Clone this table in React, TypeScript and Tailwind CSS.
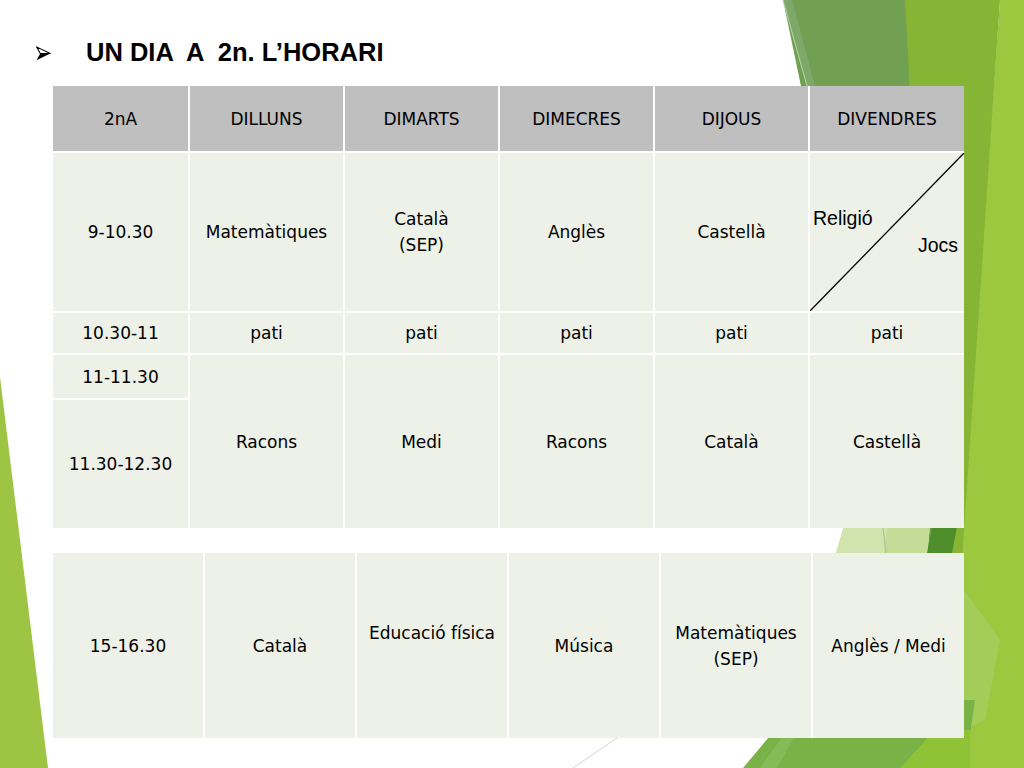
import type { ReactNode } from 'react'

// ---------------------------------------------------------------------------
// Slide: UN DIA A 2n. L'HORARI
// ---------------------------------------------------------------------------

const days = ['DILLUNS', 'DIMARTS', 'DIMECRES', 'DIJOUS', 'DIVENDRES']
const morning = ['Racons', 'Medi', 'Racons', 'Català', 'Castellà']

function Cell({
  children,
  head = false,
  className = '',
}: {
  children?: ReactNode
  head?: boolean
  className?: string
}) {
  return (
    <div
      className={`flex items-center justify-center text-center leading-[26px] ${
        head ? 'bg-[#bfbfbf]' : 'bg-[#edf1e7]'
      } ${className}`}
    >
      {children}
    </div>
  )
}

function Background() {
  return (
    <svg className="absolute inset-0" width="1024" height="768" viewBox="0 0 1024 768">
      <polygon points="0,377 48,768 0,768" fill="#9dc543" />
      <polygon points="1000,0 1024,0 1024,768 880,768 960,560" fill="#9cc840" />
      <polygon points="903,0 1000,0 962,560 935,560" fill="#86b536" />
      <polygon points="783,0 905,0 935,560 900,560" fill="#71a052" />
      <polygon points="783,0 792,0 815,86 807,86" fill="#7ea86a" />
      <polygon points="860,470 935,470 925,580 828,580" fill="#d1e4ad" />
      <polygon points="895,470 935,470 925,580 880,580" fill="#c4dc98" />
      <polygon points="937,500 962,500 947,580 922,580" fill="#4e8e2a" />
      <polygon points="964,590 1000,640 985,720 964,730" fill="#a4cc58" />
      <polygon points="743,768 800,700 975,700 965,768" fill="#79b247" />
      <polygon points="760,768 805,705 812,705 777,768" fill="#86bb5a" />
      <polygon points="900,768 935,730 970,730 970,768" fill="#90c238" />
      <line x1="783" y1="0" x2="807" y2="86" stroke="#b9d3ad" strokeWidth="1" />
      <line x1="617" y1="738" x2="573" y2="768" stroke="#d4d4d4" strokeWidth="1" />
      <line x1="883" y1="528" x2="886" y2="553" stroke="#a9bf8a" strokeWidth="1" />
    </svg>
  )
}

export default function App() {
  return (
    <div className="relative h-[768px] w-[1024px] overflow-hidden bg-white text-black">
      <Background />

      <div className="relative">
        {/* Title */}
        <div className="mt-[38px] flex h-[30px] items-center pl-[36px]">
          <svg width="15" height="15" viewBox="0 0 14 14" className="shrink-0">
            <path d="M0.5 0.8 L13.3 7 L4 7 Z" fill="white" stroke="black" strokeWidth="1" strokeLinejoin="round" />
            <path d="M4 7 L13.3 7 L0.5 13.2 Z" fill="black" />
          </svg>
          <h1
            className="ml-[35px] whitespace-pre text-[25.5px] font-bold leading-none"
            style={{ fontFamily: '"Liberation Sans", Arial, sans-serif' }}
          >
            UN DIA  A  2n. L’HORARI
          </h1>
        </div>

        <div className="ml-[53px] mt-[18px] w-[911px] text-[17px]" style={{ fontFamily: '"DejaVu Sans", sans-serif' }}>
          {/* Morning table */}
          <div className="grid grid-cols-[135px_153px_153px_153px_153px_154px] grid-rows-[65px_158px_40px_43px_128px] gap-[2px] bg-white">
            <Cell head>2nA</Cell>
            {days.map((d) => (
              <Cell key={d} head>
                {d}
              </Cell>
            ))}

            <Cell>9-10.30</Cell>
            <Cell>Matemàtiques</Cell>
            <Cell>
              Català
              <br />
              (SEP)
            </Cell>
            <Cell>Anglès</Cell>
            <Cell>Castellà</Cell>
            <div className="relative bg-[#edf1e7]" style={{ fontFamily: '"Liberation Sans", Arial, sans-serif' }}>
              <svg className="absolute inset-0" width="154" height="158" viewBox="0 0 154 158">
                <line x1="0" y1="158" x2="154" y2="0" stroke="black" strokeWidth="1.3" />
              </svg>
              <span className="absolute left-[3px] top-[52px] text-[19.5px] leading-[26px]">Religió</span>
              <span className="absolute right-[6px] top-[79px] text-[19.5px] leading-[26px]">Jocs</span>
            </div>

            <Cell>10.30-11</Cell>
            {days.map((d) => (
              <Cell key={d}>pati</Cell>
            ))}

            <Cell>11-11.30</Cell>
            {morning.map((m, i) => (
              <Cell key={i} className="row-span-2">
                {m}
              </Cell>
            ))}
            <Cell>11.30-12.30</Cell>
          </div>

          {/* Afternoon table */}
          <div className="mt-[25px] grid h-[185px] grid-cols-[150px_150px_150px_150px_150px_151px] gap-[2px] bg-white">
            <Cell>15-16.30</Cell>
            <Cell>Català</Cell>
            <Cell className="pb-[26px]">Educació física</Cell>
            <Cell>Música</Cell>
            <Cell>
              Matemàtiques
              <br />
              (SEP)
            </Cell>
            <Cell>Anglès / Medi</Cell>
          </div>
        </div>
      </div>
    </div>
  )
}
